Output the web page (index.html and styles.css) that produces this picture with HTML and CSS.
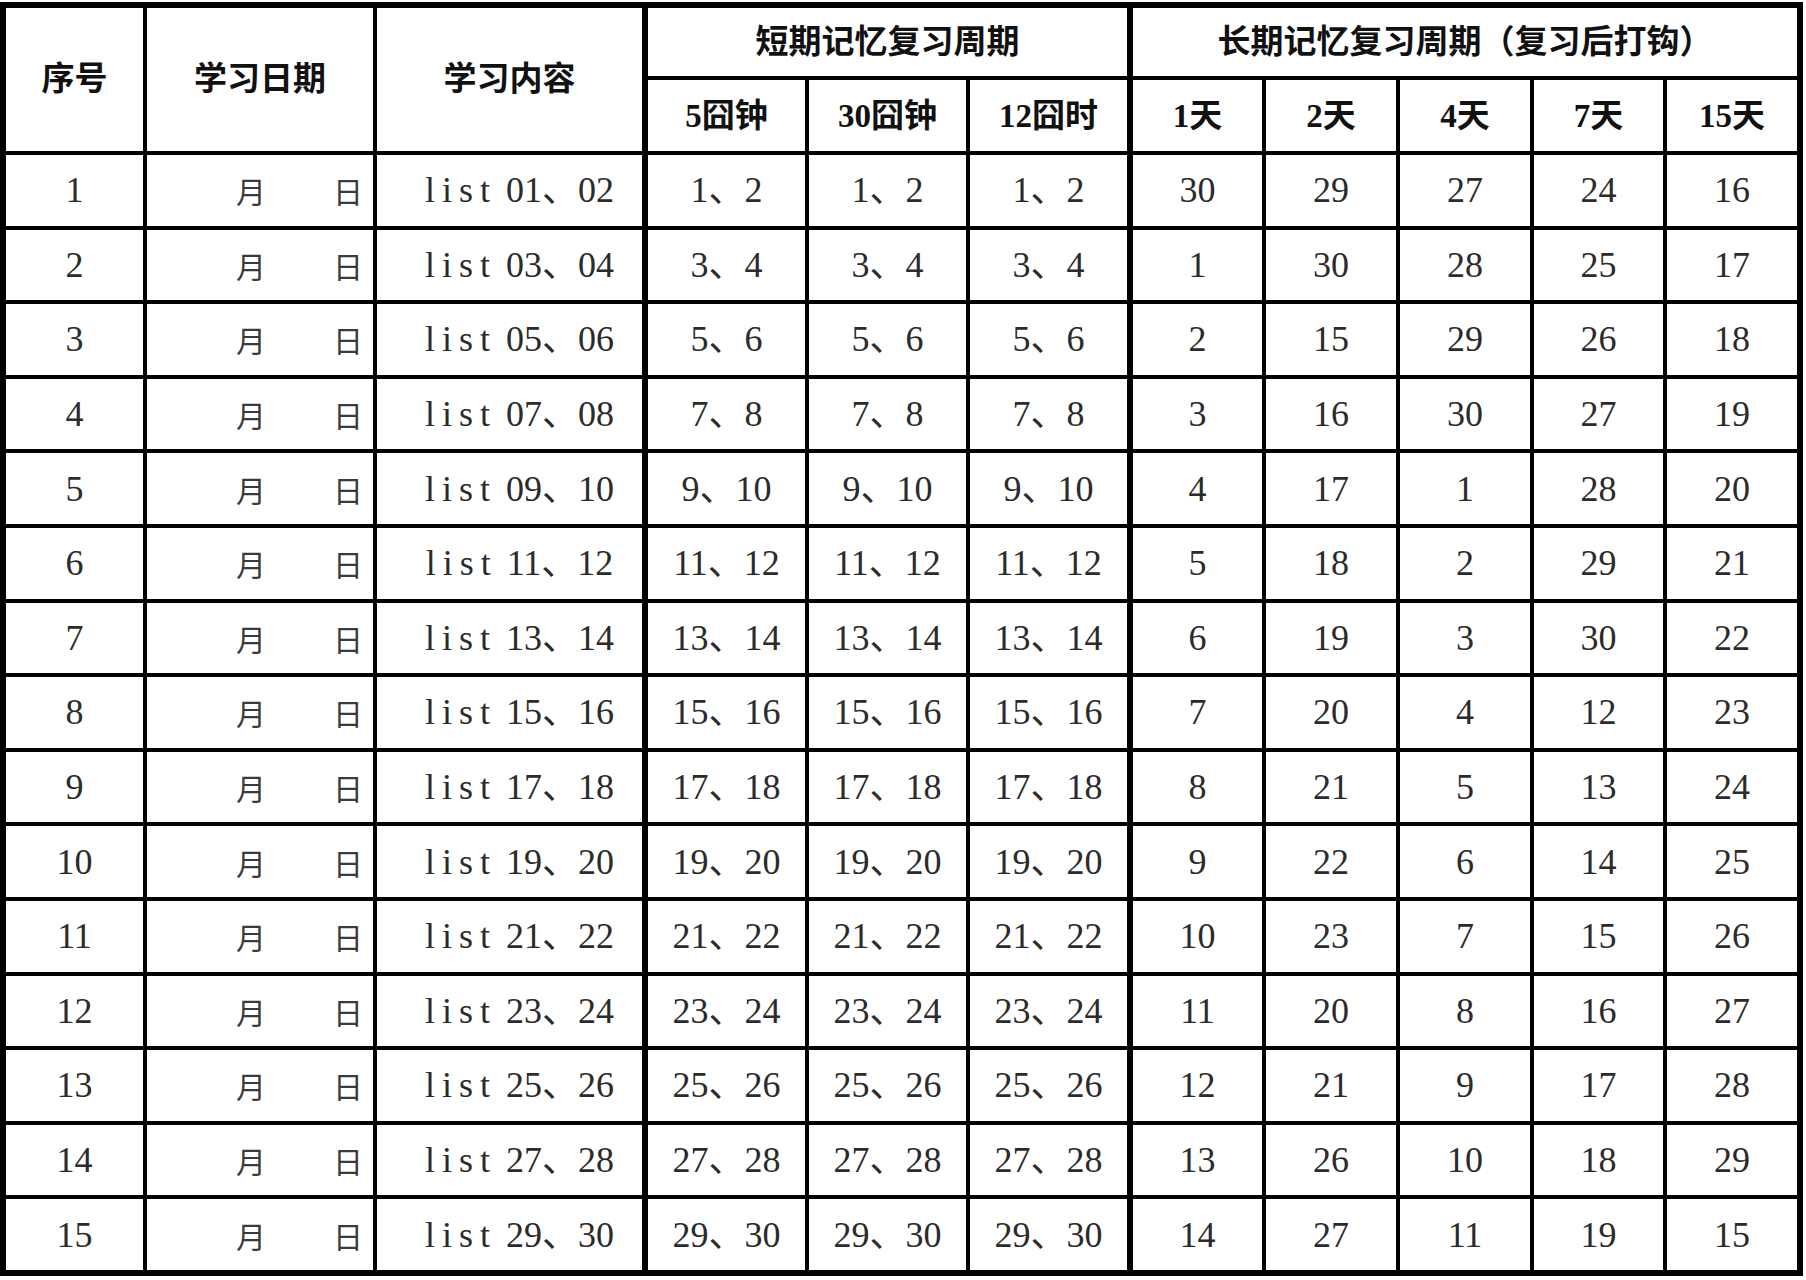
FILE: index.html
```html
<!DOCTYPE html>
<html lang="zh-CN">
<head>
<meta charset="utf-8">
<title>记忆复习周期表</title>
<link rel="stylesheet" href="styles.css">
</head>
<body>
<div class="sheet">
  <div class="cell head tall">序号</div>
  <div class="cell head tall">学习日期</div>
  <div class="cell head tall thick">学习内容</div>
  <div class="cell head short thick">短期记忆复习周期</div>
  <div class="cell head long thick">长期记忆复习周期（复习后打钩）</div>
  <div class="cell head sub">5囧钟</div>
  <div class="cell head sub">30囧钟</div>
  <div class="cell head sub thick">12囧时</div>
  <div class="cell head sub">1天</div>
  <div class="cell head sub">2天</div>
  <div class="cell head sub">4天</div>
  <div class="cell head sub">7天</div>
  <div class="cell head sub thick">15天</div>

  <div class="row"><div class="cell">1</div><div class="cell date"><span>月</span><span>日</span></div><div class="cell list"><span><span class="kw">list</span> 01、02</span></div><div class="cell">1、2</div><div class="cell">1、2</div><div class="cell">1、2</div><div class="cell">30</div><div class="cell">29</div><div class="cell">27</div><div class="cell">24</div><div class="cell">16</div></div>
  <div class="row"><div class="cell">2</div><div class="cell date"><span>月</span><span>日</span></div><div class="cell list"><span><span class="kw">list</span> 03、04</span></div><div class="cell">3、4</div><div class="cell">3、4</div><div class="cell">3、4</div><div class="cell">1</div><div class="cell">30</div><div class="cell">28</div><div class="cell">25</div><div class="cell">17</div></div>
  <div class="row"><div class="cell">3</div><div class="cell date"><span>月</span><span>日</span></div><div class="cell list"><span><span class="kw">list</span> 05、06</span></div><div class="cell">5、6</div><div class="cell">5、6</div><div class="cell">5、6</div><div class="cell">2</div><div class="cell">15</div><div class="cell">29</div><div class="cell">26</div><div class="cell">18</div></div>
  <div class="row"><div class="cell">4</div><div class="cell date"><span>月</span><span>日</span></div><div class="cell list"><span><span class="kw">list</span> 07、08</span></div><div class="cell">7、8</div><div class="cell">7、8</div><div class="cell">7、8</div><div class="cell">3</div><div class="cell">16</div><div class="cell">30</div><div class="cell">27</div><div class="cell">19</div></div>
  <div class="row"><div class="cell">5</div><div class="cell date"><span>月</span><span>日</span></div><div class="cell list"><span><span class="kw">list</span> 09、10</span></div><div class="cell">9、10</div><div class="cell">9、10</div><div class="cell">9、10</div><div class="cell">4</div><div class="cell">17</div><div class="cell">1</div><div class="cell">28</div><div class="cell">20</div></div>
  <div class="row"><div class="cell">6</div><div class="cell date"><span>月</span><span>日</span></div><div class="cell list"><span><span class="kw">list</span> 11、12</span></div><div class="cell">11、12</div><div class="cell">11、12</div><div class="cell">11、12</div><div class="cell">5</div><div class="cell">18</div><div class="cell">2</div><div class="cell">29</div><div class="cell">21</div></div>
  <div class="row"><div class="cell">7</div><div class="cell date"><span>月</span><span>日</span></div><div class="cell list"><span><span class="kw">list</span> 13、14</span></div><div class="cell">13、14</div><div class="cell">13、14</div><div class="cell">13、14</div><div class="cell">6</div><div class="cell">19</div><div class="cell">3</div><div class="cell">30</div><div class="cell">22</div></div>
  <div class="row"><div class="cell">8</div><div class="cell date"><span>月</span><span>日</span></div><div class="cell list"><span><span class="kw">list</span> 15、16</span></div><div class="cell">15、16</div><div class="cell">15、16</div><div class="cell">15、16</div><div class="cell">7</div><div class="cell">20</div><div class="cell">4</div><div class="cell">12</div><div class="cell">23</div></div>
  <div class="row"><div class="cell">9</div><div class="cell date"><span>月</span><span>日</span></div><div class="cell list"><span><span class="kw">list</span> 17、18</span></div><div class="cell">17、18</div><div class="cell">17、18</div><div class="cell">17、18</div><div class="cell">8</div><div class="cell">21</div><div class="cell">5</div><div class="cell">13</div><div class="cell">24</div></div>
  <div class="row"><div class="cell">10</div><div class="cell date"><span>月</span><span>日</span></div><div class="cell list"><span><span class="kw">list</span> 19、20</span></div><div class="cell">19、20</div><div class="cell">19、20</div><div class="cell">19、20</div><div class="cell">9</div><div class="cell">22</div><div class="cell">6</div><div class="cell">14</div><div class="cell">25</div></div>
  <div class="row"><div class="cell">11</div><div class="cell date"><span>月</span><span>日</span></div><div class="cell list"><span><span class="kw">list</span> 21、22</span></div><div class="cell">21、22</div><div class="cell">21、22</div><div class="cell">21、22</div><div class="cell">10</div><div class="cell">23</div><div class="cell">7</div><div class="cell">15</div><div class="cell">26</div></div>
  <div class="row"><div class="cell">12</div><div class="cell date"><span>月</span><span>日</span></div><div class="cell list"><span><span class="kw">list</span> 23、24</span></div><div class="cell">23、24</div><div class="cell">23、24</div><div class="cell">23、24</div><div class="cell">11</div><div class="cell">20</div><div class="cell">8</div><div class="cell">16</div><div class="cell">27</div></div>
  <div class="row"><div class="cell">13</div><div class="cell date"><span>月</span><span>日</span></div><div class="cell list"><span><span class="kw">list</span> 25、26</span></div><div class="cell">25、26</div><div class="cell">25、26</div><div class="cell">25、26</div><div class="cell">12</div><div class="cell">21</div><div class="cell">9</div><div class="cell">17</div><div class="cell">28</div></div>
  <div class="row"><div class="cell">14</div><div class="cell date"><span>月</span><span>日</span></div><div class="cell list"><span><span class="kw">list</span> 27、28</span></div><div class="cell">27、28</div><div class="cell">27、28</div><div class="cell">27、28</div><div class="cell">13</div><div class="cell">26</div><div class="cell">10</div><div class="cell">18</div><div class="cell">29</div></div>
  <div class="row"><div class="cell">15</div><div class="cell date"><span>月</span><span>日</span></div><div class="cell list"><span><span class="kw">list</span> 29、30</span></div><div class="cell">29、30</div><div class="cell">29、30</div><div class="cell">29、30</div><div class="cell">14</div><div class="cell">27</div><div class="cell">11</div><div class="cell">19</div><div class="cell">15</div></div>
</div>
</body>
</html>
```
FILE: styles.css
```css
html, body {
  margin: 0;
  padding: 0;
  background: #ffffff;
}

body {
  padding-top: 2px;
}

.sheet {
  display: grid;
  grid-template-columns: 141px 230px 271px 161px 161px 163px 133px 134px 134px 133px 136px;
  grid-template-rows: 72px 75px repeat(14, 74.6px) 76.6px;
  width: max-content;
  border-top: 6px solid #000;
  border-left: 6px solid #000;
  font-family: "Liberation Serif", "Noto Sans CJK SC", serif;
  color: #2b2b2b;
}

.row {
  display: contents;
}

.cell {
  display: flex;
  align-items: center;
  justify-content: center;
  border-right: 4px solid #000;
  border-bottom: 4px solid #000;
  font-size: 36px;
  line-height: 1;
  white-space: nowrap;
  box-sizing: border-box;
  min-width: 0;
}

.row > .cell:nth-child(3),
.row > .cell:nth-child(6),
.row > .cell:nth-child(11),
.cell.thick {
  border-right-width: 6px;
}

.row:last-child > .cell {
  border-bottom-width: 6px;
}

.head {
  font-family: "Liberation Serif", "Noto Sans CJK SC", sans-serif;
  font-weight: 700;
  font-size: 33px;
  color: #111;
}

.tall {
  grid-row: span 2;
}

.short {
  grid-column: span 3;
}

.long {
  grid-column: span 5;
}

.sub {
  padding-top: 2px;
}

.list {
  padding-left: 20px;
}

.kw {
  letter-spacing: 7px;
}

.date {
  justify-content: flex-end;
  gap: 67px;
  padding-right: 10px;
  font-family: "Noto Sans CJK SC", sans-serif;
  font-size: 30px;
  font-weight: 400;
  color: #3a3a3a;
}
```
